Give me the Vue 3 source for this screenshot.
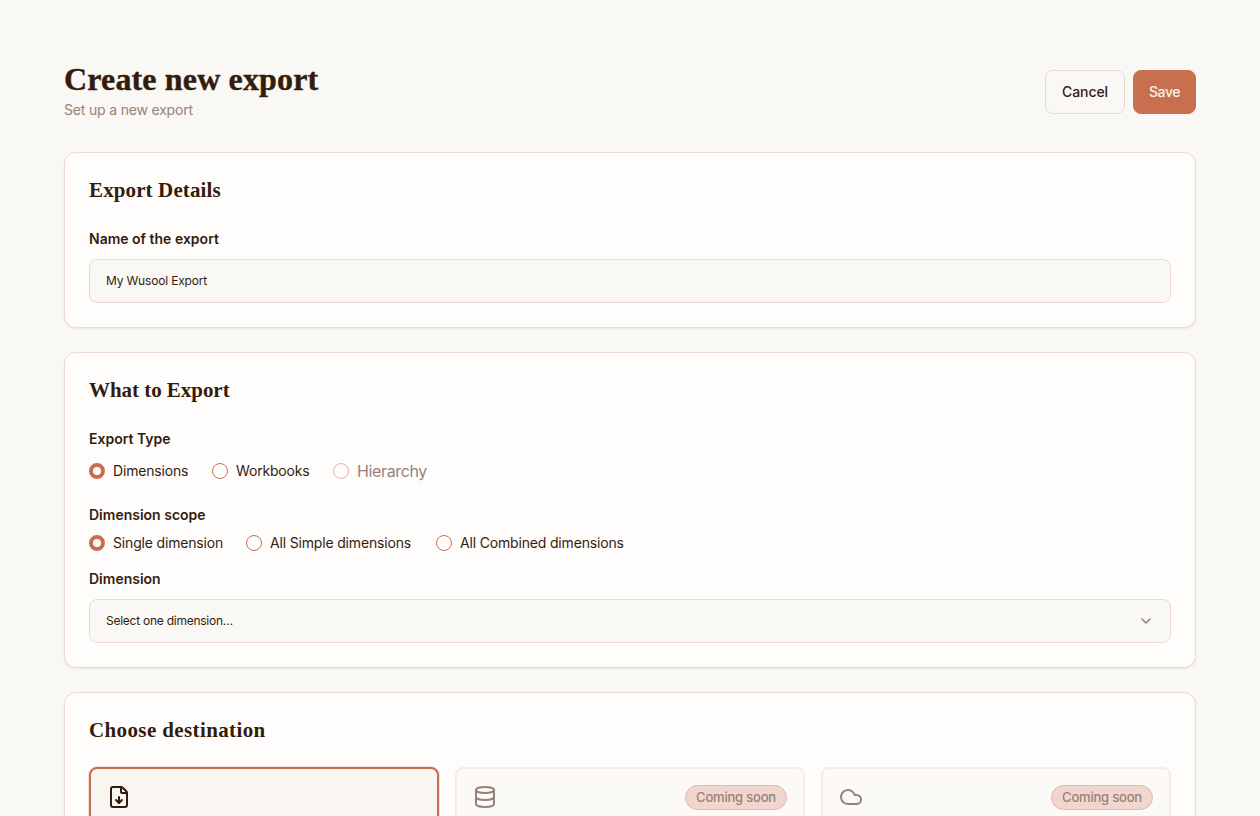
<template>
  <main class="page">
    <header class="header">
      <div>
        <h1 class="title">Create new export</h1>
        <p class="subtitle">Set up a new export</p>
      </div>
      <div class="actions">
        <button class="btn btn-outline" type="button">Cancel</button>
        <button class="btn btn-primary" type="button">Save</button>
      </div>
    </header>

    <section class="card">
      <h2 class="card-title">Export Details</h2>
      <label class="label" for="export-name">Name of the export</label>
      <input id="export-name" v-model="name" class="field input" type="text" />
    </section>

    <section class="card">
      <h2 class="card-title title-what">What to Export</h2>

      <div class="label">Export Type</div>
      <div class="radios types">
        <label
          v-for="t in types"
          :key="t.value"
          class="radio"
          :class="{ disabled: t.disabled }"
          :style="{ width: `${t.width}px` }"
        >
          <input v-model="type" type="radio" name="type" :value="t.value" :disabled="t.disabled" />
          <span>{{ t.label }}</span>
        </label>
      </div>

      <div class="label label-scope">Dimension scope</div>
      <div class="radios scopes">
        <label
          v-for="s in scopes"
          :key="s.value"
          class="radio"
          :style="{ width: `${s.width}px` }"
        >
          <input v-model="scope" type="radio" name="scope" :value="s.value" />
          <span>{{ s.label }}</span>
        </label>
      </div>

      <div class="label">Dimension</div>
      <button class="field select" type="button">
        <span>Select one dimension…</span>
        <svg class="chevron" viewBox="0 0 24 24" aria-hidden="true">
          <path d="m6 9 6 6 6-6" />
        </svg>
      </button>
    </section>

    <section class="card">
      <h2 class="card-title title-destination">Choose destination</h2>
      <div class="destinations">
        <div
          v-for="d in destinations"
          :key="d.id"
          class="destination"
          :class="{ selected: d.id === destination, soon: d.soon }"
        >
          <svg class="icon" viewBox="0 0 24 24" aria-hidden="true">
            <template v-if="d.id === 'file'">
              <path d="M6 22a2 2 0 0 1-2-2V4a2 2 0 0 1 2-2h8a2.4 2.4 0 0 1 1.704.706l3.588 3.588A2.4 2.4 0 0 1 20 8v12a2 2 0 0 1-2 2z" />
              <path d="M14 2v5a1 1 0 0 0 1 1h5" />
              <path d="M12 18v-6" />
              <path d="m9 15 3 3 3-3" />
            </template>
            <template v-else-if="d.id === 'database'">
              <ellipse cx="12" cy="5" rx="9" ry="3" />
              <path d="M3 5v14a9 3 0 0 0 18 0V5" />
              <path d="M3 12a9 3 0 0 0 18 0" />
            </template>
            <path v-else d="M17.5 19H9a7 7 0 1 1 6.71-9h1.79a4.5 4.5 0 1 1 0 9Z" />
          </svg>
          <span v-if="d.soon" class="badge">Coming soon</span>
        </div>
      </div>
    </section>
  </main>
</template>

<script setup>
import { ref } from "vue";

const name = ref("My Wusool Export");
const type = ref("dimensions");
const scope = ref("single");
const destination = ref("file");

const types = [
  { value: "dimensions", label: "Dimensions", width: 99 },
  { value: "workbooks", label: "Workbooks", width: 97 },
  { value: "hierarchy", label: "Hierarchy", width: 95, disabled: true },
];

const scopes = [
  { value: "single", label: "Single dimension", width: 133 },
  { value: "simple", label: "All Simple dimensions", width: 166 },
  { value: "combined", label: "All Combined dimensions", width: 190 },
];

const destinations = [
  { id: "file", soon: false },
  { id: "database", soon: true },
  { id: "cloud", soon: true },
];
</script>

<style>
body {
  margin: 0;
  overflow: hidden;
  background: #f9f8f4;
}
</style>

<style scoped>
.page {
  box-sizing: border-box;
  height: 816px;
  overflow: hidden;
  padding: 64px 64px 0;
  background: #f9f8f4;
  color: #341c0d;
  font-family: Inter, sans-serif;
  font-size: 14px;
  line-height: 20px;
}

.header {
  display: flex;
  align-items: center;
  justify-content: space-between;
  margin-bottom: 32px;
}

.title {
  margin: 0;
  padding-bottom: 5px;
  font-family: "Liberation Serif", serif;
  font-size: 32px;
  font-weight: 700;
  line-height: 31px;
  letter-spacing: 0.15px;
  -webkit-text-stroke: 0.4px;
}

.subtitle {
  margin: 0;
  color: #968278;
  letter-spacing: -0.18px;
}

.actions {
  display: flex;
  gap: 8px;
}

.btn {
  box-sizing: border-box;
  height: 44px;
  padding: 0;
  border: 1px solid #ecd8d0;
  border-radius: 8px;
  font: 500 14px/20px Inter, sans-serif;
  cursor: pointer;
}

.btn-outline {
  width: 80px;
  background: #f9f8f4;
  color: #341c0d;
  letter-spacing: -0.1px;
}

.btn-primary {
  width: 63px;
  border-color: #c76f4f;
  background: #c76f4f;
  color: #fbf1ea;
  letter-spacing: -0.4px;
}

.card {
  margin-bottom: 24px;
  padding: 24px;
  border: 1px solid #ecd8d0;
  border-radius: 12px;
  background: #fffdfc;
  box-shadow: 0 1px 2px rgba(52, 28, 13, 0.08);
}

.card-title {
  margin: 0 0 24px;
  font-family: "Liberation Serif", serif;
  font-size: 21px;
  font-weight: 700;
  line-height: 27px;
  padding-bottom: 1px;
  letter-spacing: 0.12px;
}

.title-what {
  letter-spacing: -0.04px;
}

.title-destination {
  margin-bottom: 22px;
  letter-spacing: 0.38px;
}

.label {
  display: block;
  margin-bottom: 10px;
  font-weight: 600;
}

.label-scope {
  margin-bottom: 8px;
}

.field {
  box-sizing: border-box;
  display: block;
  width: 100%;
  height: 44px;
  padding: 0 16px;
  border: 1px solid #ecd8d0;
  border-radius: 8px;
  outline: none;
  background: #f9f8f4;
  color: #341c0d;
  font: 400 12px/20px Inter, sans-serif;
  letter-spacing: -0.18px;
}

.input {
  padding-bottom: 2px;
}

.select {
  display: flex;
  align-items: center;
  justify-content: space-between;
  text-align: left;
  letter-spacing: -0.25px;
}

.chevron {
  width: 16px;
  height: 16px;
  fill: none;
  stroke: #968278;
  stroke-width: 2.4;
  stroke-linecap: round;
  stroke-linejoin: round;
}

.radios {
  display: flex;
  align-items: center;
  gap: 24px;
}

.types {
  height: 24px;
  margin-bottom: 22px;
}

.scopes {
  height: 20px;
  margin-bottom: 16px;
}

.radio {
  display: flex;
  align-items: center;
  gap: 8px;
  letter-spacing: -0.17px;
  white-space: nowrap;
}

.radio input {
  appearance: none;
  box-sizing: border-box;
  flex: none;
  width: 16px;
  height: 16px;
  margin: 0;
  border: 1px solid #c76f4f;
  border-radius: 50%;
}

.radio input:checked {
  border-width: 4px;
}

.radio.disabled {
  color: #968278;
  font-size: 16px;
  letter-spacing: -0.36px;
}

.radio.disabled input {
  opacity: 0.5;
}

.destinations {
  display: grid;
  grid-template-columns: repeat(3, 1fr);
  gap: 16px;
}

.destination {
  box-sizing: border-box;
  display: flex;
  align-items: flex-start;
  justify-content: space-between;
  height: 130px;
  padding: 16px;
  border: 2px solid #f4ece7;
  border-radius: 8px;
  background: #fcfaf7;
}

.destination.selected {
  border-color: #c76f4f;
  background: #f9f5f1;
  box-shadow: 0 0 0 1px rgba(199, 111, 79, 0.2);
}

.icon {
  width: 24px;
  height: 24px;
  fill: none;
  stroke: currentColor;
  stroke-width: 2;
  stroke-linecap: round;
  stroke-linejoin: round;
}

.soon {
  color: #968278;
}

.badge {
  box-sizing: border-box;
  width: 102px;
  height: 25px;
  border: 1px solid #e2b9aa;
  border-radius: 13px;
  background: #f0d6cc;
  font-size: 13px;
  font-weight: 500;
  line-height: 23px;
  letter-spacing: -0.2px;
  text-align: center;
}
</style>
